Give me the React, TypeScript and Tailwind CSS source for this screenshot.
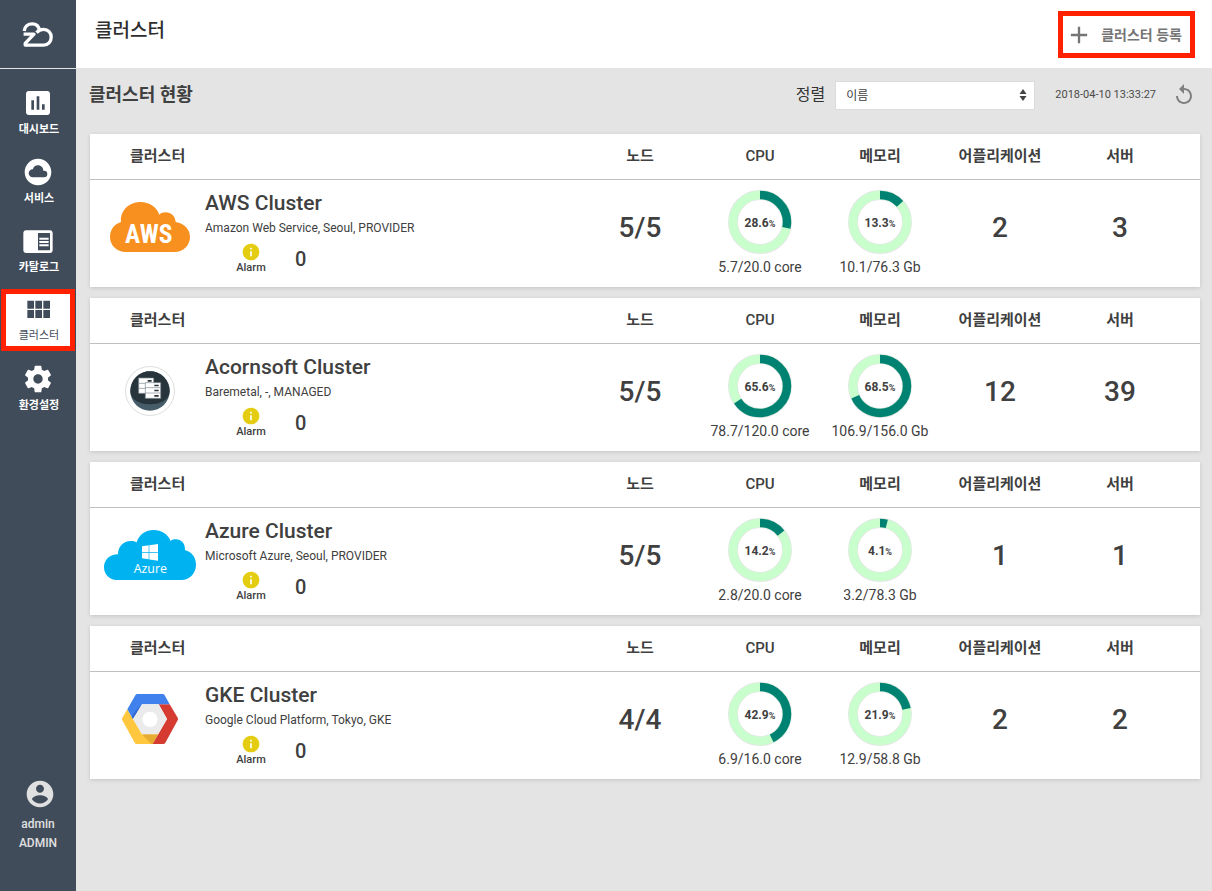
import React from 'react';
import { MdAdd, MdChromeReaderMode, MdCloudCircle, MdInfo, MdReplay } from 'react-icons/md';

type Cluster = {
  name: string;
  description: string;
  logo: React.ReactNode;
  alarms: number;
  nodes: string;
  cpu: number;
  cpuText: string;
  memory: number;
  memoryText: string;
  applications: number;
  servers: number;
};

function Glyph({ d }: { d: string }) {
  return (
    <svg viewBox="0 0 24 24" className="size-8" fill="currentColor" aria-hidden="true">
      <path d={d} />
    </svg>
  );
}

const assessment =
  'M19 3H5c-1.1 0-2 .9-2 2v14c0 1.1.9 2 2 2h14c1.1 0 2-.9 2-2V5c0-1.1-.9-2-2-2zM9 17H7v-7h2v7zm4 0h-2V7h2v10zm4 0h-2v-4h2v4z';
const modules =
  'M4 11h5V5H4v6zm0 7h5v-6H4v6zm6 0h5v-6h-5v6zm6 0h5v-6h-5v6zm-6-7h5V5h-5v6zm6-6v6h5V5h-5z';
const gear =
  'M19.43 12.98c.04-.32.07-.64.07-.98s-.03-.66-.07-.98l2.11-1.65c.19-.15.24-.42.12-.64l-2-3.46c-.12-.22-.39-.3-.61-.22l-2.49 1c-.52-.4-1.08-.73-1.69-.98l-.38-2.65C14.46 2.18 14.25 2 14 2h-4c-.25 0-.46.18-.49.42l-.38 2.65c-.61.25-1.17.59-1.69.98l-2.49-1c-.23-.09-.49 0-.61.22l-2 3.46c-.13.22-.07.49.12.64l2.11 1.65c-.04.32-.07.65-.07.98s.03.66.07.98l-2.11 1.65c-.19.15-.24.42-.12.64l2 3.46c.12.22.39.3.61.22l2.49-1c.52.4 1.08.73 1.69.98l.38 2.65c.03.24.24.42.49.42h4c.25 0 .46-.18.49-.42l.38-2.65c.61-.25 1.17-.59 1.69-.98l2.49 1c.23.09.49 0 .61-.22l2-3.46c.12-.22.07-.49-.12-.64l-2.11-1.65zM12 15.5c-1.93 0-3.5-1.57-3.5-3.5s1.57-3.5 3.5-3.5 3.5 1.57 3.5 3.5-1.57 3.5-3.5 3.5z';
const account =
  'M12 2C6.48 2 2 6.48 2 12s4.48 10 10 10 10-4.48 10-10S17.52 2 12 2zm0 3c1.66 0 3 1.34 3 3s-1.34 3-3 3-3-1.34-3-3 1.34-3 3-3zm0 14.2c-2.5 0-4.71-1.28-6-3.22.03-1.99 4-3.08 6-3.08 1.99 0 5.97 1.09 6 3.08-1.29 1.94-3.5 3.22-6 3.22z';

function BrandMark() {
  return (
    <svg viewBox="22 20 32 28" className="h-7 w-8" fill="none" stroke="white" strokeWidth="3.3" aria-hidden="true">
      <path d="M24.2 31C24.6 26.8 28 23.8 32.2 23.8C36.3 23.8 39 26.2 39.6 30.8" />
      <path d="M36.5 32.6C38.3 30.6 41 29.4 43.6 29.4C48.1 29.4 51.2 33 51.2 37.2C51.2 41.5 48 45.1 43.6 45.1H25.2V43.4L34 34.2H23.6" strokeLinejoin="round" />
    </svg>
  );
}

function AwsLogo() {
  return (
    <svg viewBox="0 0 240 150" className="h-[50px] w-20" role="img" aria-label="AWS">
      <path
        fill="#f7901e"
        d="M48 150C20 150 0 130 0 105C0 82 14 66 33 60C30 25 58 0 92 0C118 0 140 15 148 38C152 33 160 31 167 31C183 31 196 43 197 60C222 64 240 82 240 105C240 130 220 150 194 150Z"
      />
      <text x="116" y="124" textAnchor="middle" fill="white" fontSize="76" fontWeight="700" fontFamily="Liberation Sans Narrow, Roboto Condensed, Roboto, sans-serif">
        AWS
      </text>
    </svg>
  );
}

function ServerLogo() {
  return (
    <svg viewBox="0 0 150 150" className="size-[50px]" aria-hidden="true">
      <circle cx="75" cy="75" r="73.5" fill="white" stroke="#dedede" strokeWidth="3" />
      <circle cx="75" cy="75" r="59" fill="#465d69" />
      <path d="M16 75A59 59 0 0 1 134 75C134 100 108 115 75 115S16 100 16 75Z" fill="#27343b" />
      <g fill="white" stroke="#7d888e" strokeWidth="2">
        <path d="M41 36H86V82H41Z" />
        <path d="M41 52H86M41 67H86" />
        <path d="M61 50H107V97H61Z" />
        <path d="M61 65H107M61 81H107" />
      </g>
      <path d="M68 42H80V47H68ZM88 56H101V61H88ZM88 71H101V76H88ZM88 87H101V92H88Z" fill="#27343b" />
    </svg>
  );
}

function AzureLogo() {
  return (
    <svg viewBox="0 0 276 150" className="h-[50px] w-[92px]" role="img" aria-label="Azure">
      <path
        fill="#00b3f0"
        d="M38 150C17 150 0 134 0 112C0 90 16 73 42 73C42 50 58 33 80 33C87 33 93 34 98 37C105 14 124 0 149 0C173 0 192 13 200 33C204 29 210 28 216 28C232 28 244 41 243 60C263 66 276 82 276 104C276 130 256 150 232 150Z"
      />
      <path fill="white" d="M114 49L134 46V66H114ZM136 45.500L162 42V66H136ZM114 68H134V88L114 85ZM136 68H162V92L136 88.500Z" />
      <text x="139" y="128" textAnchor="middle" fill="white" fontSize="37" fontFamily="Open Sans, sans-serif">
        Azure
      </text>
    </svg>
  );
}

function GoogleLogo() {
  return (
    <svg viewBox="0 0 168 150" className="h-[50px] w-14" aria-hidden="true">
      <path fill="#fec73e" d="M16 46L33 75L60 121H108L92 150H44Q40 150 38 146L1 79Q-1 75 1 71Z" />
      <path fill="#e7ab2f" d="M60 121H108L92 150H88Z" />
      <path fill="#d63b32" d="M110 31H143L167 71Q169 75 167 79L130 146Q128 150 124 150H92L135 75Z" />
      <path fill="#4081ee" d="M16 46L40 4Q42 0 46 0H122Q126 0 128 4L143 31H60L33 75Z" />
      <path fill="#3268cf" d="M33 75L60 31L40 52L29 68Z" />
      <path fill="#ebebeb" d="M60 31H110L135 75L108 121H60L33 75Z" />
      <circle cx="84" cy="76" r="23" fill="white" />
    </svg>
  );
}

const clusters: Cluster[] = [
  { name: 'AWS Cluster', description: 'Amazon Web Service, Seoul, PROVIDER', logo: <AwsLogo />, alarms: 0, nodes: '5/5', cpu: 28.6, cpuText: '5.7/20.0 core', memory: 13.3, memoryText: '10.1/76.3 Gb', applications: 2, servers: 3 },
  { name: 'Acornsoft Cluster', description: 'Baremetal, -, MANAGED', logo: <ServerLogo />, alarms: 0, nodes: '5/5', cpu: 65.6, cpuText: '78.7/120.0 core', memory: 68.5, memoryText: '106.9/156.0 Gb', applications: 12, servers: 39 },
  { name: 'Azure Cluster', description: 'Microsoft Azure, Seoul, PROVIDER', logo: <AzureLogo />, alarms: 0, nodes: '5/5', cpu: 14.2, cpuText: '2.8/20.0 core', memory: 4.1, memoryText: '3.2/78.3 Gb', applications: 1, servers: 1 },
  { name: 'GKE Cluster', description: 'Google Cloud Platform, Tokyo, GKE', logo: <GoogleLogo />, alarms: 0, nodes: '4/4', cpu: 42.9, cpuText: '6.9/16.0 core', memory: 21.9, memoryText: '12.9/58.8 Gb', applications: 2, servers: 2 },
];

function Donut({ value, caption }: { value: number; caption: string }) {
  return (
    <div className="flex flex-col items-center gap-[3px]">
      <div className="grid size-16 place-items-center">
        <svg viewBox="0 0 64 64" className="col-start-1 row-start-1 size-16" fill="none" aria-hidden="true">
          <circle cx="32" cy="32" r="27" stroke="#e6e6e6" strokeWidth="10" />
          <circle cx="32" cy="32" r="27" stroke="#c8ffcd" strokeWidth="8.500" />
          <circle
            cx="32"
            cy="32"
            r="27"
            stroke="#008272"
            strokeWidth="8.500"
            pathLength="100"
            strokeDasharray={`${value} 100`}
            transform="rotate(-90 32 32)"
          />
        </svg>
        <span className="col-start-1 row-start-1 pt-0.5 text-xs font-bold">
          {value.toFixed(1)}
          <span className="text-[9px]">%</span>
        </span>
      </div>
      <span className="text-sm leading-5">{caption}</span>
    </div>
  );
}

function ClusterCard({ cluster }: { cluster: Cluster }) {
  return (
    <table className="w-full table-fixed bg-white text-center shadow-[0_1px_4px_rgba(0,0,0,0.14)]">
      <thead>
        <tr className="h-[45px] border-b border-[#bfbfbf] text-[15px]">
          <th className="p-0 pl-10 text-left font-bold">클러스터</th>
          <th className="w-30 p-0 font-bold">노드</th>
          <th className="w-30 p-0 font-medium">CPU</th>
          <th className="w-30 p-0 font-bold">메모리</th>
          <th className="w-30 p-0 font-bold">어플리케이션</th>
          <th className="w-35 p-0 pr-5 font-bold">서버</th>
        </tr>
      </thead>
      <tbody>
        <tr className="h-[108px]">
          <td className="p-0 text-left">
            <div className="flex">
              <div className="flex w-[115px] shrink-0 items-center justify-center pb-3 pl-[5px]">{cluster.logo}</div>
              <div className="pb-1">
                <h3 className="text-[21px] leading-7 font-medium">{cluster.name}</h3>
                <p className="text-xs leading-[22px]">{cluster.description}</p>
                <div className="flex items-center pt-[3px]">
                  <div className="flex w-[90px] flex-col items-center pl-0.5">
                    <MdInfo className="size-5 text-[#e4cd10]" />
                    <span className="text-[11px] leading-3 font-medium">Alarm</span>
                  </div>
                  <span className="pt-0.5 text-xl leading-7 font-medium">{cluster.alarms}</span>
                </div>
              </div>
            </div>
          </td>
          <td className="p-0 pb-2.5 text-[28px] font-medium">{cluster.nodes}</td>
          <td className="p-0"><Donut value={cluster.cpu} caption={cluster.cpuText} /></td>
          <td className="p-0"><Donut value={cluster.memory} caption={cluster.memoryText} /></td>
          <td className="p-0 pb-2.5 text-[28px] font-medium">{cluster.applications}</td>
          <td className="p-0 pr-5 pb-2.5 text-[28px] font-medium">{cluster.servers}</td>
        </tr>
      </tbody>
    </table>
  );
}

const menu = [
  { label: '대시보드', icon: <Glyph d={assessment} /> },
  { label: '서비스', icon: <MdCloudCircle className="size-8" /> },
  { label: '카탈로그', icon: <MdChromeReaderMode className="size-8" /> },
  { label: '클러스터', icon: <Glyph d={modules} />, active: true },
  { label: '환경설정', icon: <Glyph d={gear} /> },
];

export default function App() {
  return (
    <div className="flex min-h-screen bg-[#e4e4e4] font-[Roboto,'Noto_Sans_CJK_KR',sans-serif] text-[#404040]">
      <aside className="flex w-[76px] shrink-0 flex-col bg-[#414c5b] text-white">
        <a href="#home" aria-label="Home" className="flex h-[69px] items-center justify-center border-b border-[#e4e4e4]">
          <BrandMark />
        </a>
        <nav className="flex flex-col gap-[7px] pt-[13px]">
          {menu.map((item) => (
            <a
              key={item.label}
              href={`#${item.label}`}
              className={
                item.active
                  ? 'mr-px ml-px flex h-[62px] flex-col items-center border-[5px] border-[#ff2100] bg-white text-[#414c5b]'
                  : 'flex h-[62px] flex-col items-center pt-[5px]'
              }
            >
              {item.icon}
              <span className={item.active ? 'pl-0.5 text-[11px] leading-5' : 'pl-0.5 text-[11px] leading-[22px] font-bold'}>{item.label}</span>
            </a>
          ))}
        </nav>
        <div className="mt-auto flex flex-col items-center pb-[38px] text-xs leading-[19px] font-medium text-[#e0e0e0]">
          <span className="pl-1">
            <Glyph d={account} />
          </span>
          <span className="pt-[5px]">admin</span>
          <span>ADMIN</span>
        </div>
      </aside>

      <div className="flex min-w-0 grow flex-col">
        <header className="flex h-[68px] items-center justify-between bg-white pr-[17px] pl-[19px]">
          <h1 className="pb-1.5 text-[19px] font-medium text-[#2e2e2e]">클러스터</h1>
          <button type="button" className="flex h-[47px] items-center gap-2 border-[5px] border-[#ff2100] pt-0.5 pr-2 pl-0.5 text-sm font-bold text-[#757575]">
            <MdAdd className="size-7" />
            클러스터 등록
          </button>
        </header>

        <main className="pr-3 pl-[13px]">
          <div className="flex h-[66px] items-center justify-between pr-1 pb-3">
            <h2 className="text-lg font-bold">클러스터 현황</h2>
            <div className="flex items-center">
              <label htmlFor="sort" className="text-base text-[#333333]">정렬</label>
              <div className="relative ml-2.5">
                <select id="sort" className="block h-[29px] w-50 appearance-none border border-[#dcdcdc] bg-white px-2.5 pt-0.5 text-xs text-[#404040]">
                  <option>이름</option>
                </select>
                <svg viewBox="0 0 8 12" className="pointer-events-none absolute top-2 right-2 h-3 w-2" fill="#444444" aria-hidden="true">
                  <path d="M4 0L7.500 5H.5ZM4 12L.5 7H7.500Z" />
                </svg>
              </div>
              <time className="ml-5 text-[11px] text-[#4a4a4a]">2018-04-10 13:33:27</time>
              <button type="button" aria-label="새로고침" className="ml-4 text-[#808080]">
                <MdReplay className="size-6" />
              </button>
            </div>
          </div>
          <div className="flex flex-col gap-[11px] pb-3 pl-px">
            {clusters.map((cluster) => (
              <ClusterCard key={cluster.name} cluster={cluster} />
            ))}
          </div>
        </main>
      </div>
    </div>
  );
}
